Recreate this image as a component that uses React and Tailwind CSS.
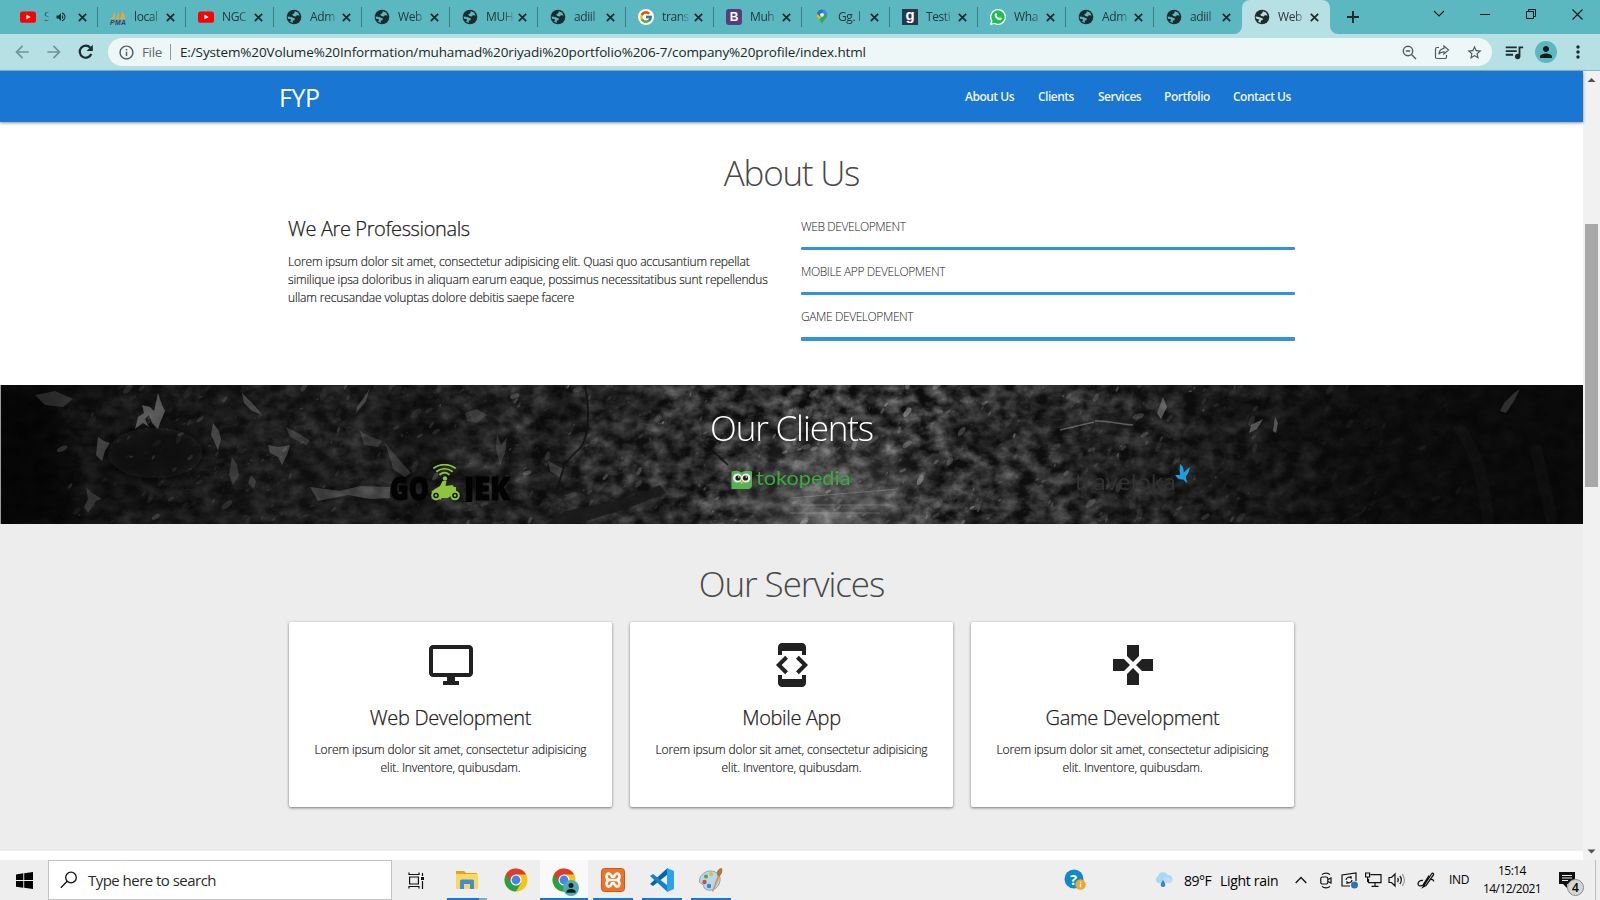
import React from "react";
import { MdDeveloperMode, MdGamepad, MdQueueMusic, MdPerson, MdArrowBack, MdArrowForward, MdStarBorder, MdInfoOutline, MdVolumeUp, MdMoreVert } from "react-icons/md";
import { FcGoogle } from "react-icons/fc";

const SANS = "font-['Open_Sans','Noto_Sans',sans-serif]";

function Globe({ land = "#5cb8c0" }) {
  return (
    <svg width="16" height="16" viewBox="0 0 16 16">
      <circle cx="8" cy="8" r="7.3" fill="#1c2b2e" />
      <path d="M9 2.2 12 3.6 13.6 6.6 10.6 6.2 9.8 7.6 7.2 6.9 6.2 5.2 8 4.4ZM1.6 7.6 5 8 7.6 9 8.6 9.2 8.8 11 6.8 11.6 6.6 14 4 12.6 5.4 10.4 1.9 9.6Z" fill={land} />
    </svg>
  );
}
function GlobeActive() {
  return <Globe land="#b6e0e3" />;
}
function YouTube() {
  return (
    <svg width="16" height="16" viewBox="0 0 16 16">
      <rect x="0" y="2.4" width="16" height="11.4" rx="2.6" fill="#f00" />
      <path d="M6.4 5.6v5l4.2-2.5z" fill="#fff" />
    </svg>
  );
}
function Pma() {
  return (
    <svg width="16" height="16" viewBox="0 0 16 16">
      <path d="M4.8 1 5 10H.5C3 8 4.300 4.500 4.800 1ZM8.600 0 9 10H5.500C7.600 7.500 8.300 4 8.600 0ZM11.500 2c2.300 2 3.300 4.500 3.800 8H9.600C11.300 8 12 5.500 11.500 2Z" fill="#f2a336" />
      <text x="0" y="15.800" fontSize="6.800" fontWeight="800" fontStyle="italic" textLength="16" fontFamily="Liberation Sans, sans-serif" fill="#2f3f6a">PMA</text>
    </svg>
  );
}
function Google() {
  return (
    <span className="flex size-4 items-center justify-center rounded-full bg-white">
      <FcGoogle size={14} />
    </span>
  );
}
function Bootstrap() {
  return <span className="flex size-4 items-center justify-center rounded-[3px] bg-[#563d7c] font-['Liberation_Sans',sans-serif] text-[12px] font-bold text-white">B</span>;
}
function Maps() {
  return (
    <svg width="16" height="16" viewBox="0 0 16 16">
      <defs>
        <clipPath id="pin"><path d="M8 .5a5.300 5.300 0 0 1 5.300 5.300C13.300 9.600 8.900 11 8 15.500 7.100 11 2.700 9.600 2.700 5.800A5.300 5.300 0 0 1 8 .5Z" /></clipPath>
      </defs>
      <g clipPath="url(#pin)">
        <rect width="16" height="16" fill="#34a853" />
        <path d="M0 0h16L9 6 3 13H0Z" fill="#fbbc04" />
        <path d="M0 0h7l-4 6-3 1Z" fill="#ea4335" />
        <path d="M6 0h7L6 8 3 4Z" fill="#1a73e8" />
        <path d="M10 0h6v5L11 6 8 4Z" fill="#4285f4" />
      </g>
      <circle cx="8" cy="5.800" r="1.900" fill="#e9f4f5" />
    </svg>
  );
}
function NineIcon() {
  return <span className="flex size-4 items-center justify-center bg-[#26384a] pb-[3px] font-['Liberation_Sans',sans-serif] text-[15px] font-bold text-white">g</span>;
}
function WhatsApp() {
  return (
    <svg width="16" height="16" viewBox="0 0 16 16">
      <path d="M8 0a8 8 0 0 1 0 16 8 8 0 0 1-3.600-.9L0 16l1-4.300A8 8 0 0 1 8 0Z" fill="#fff" />
      <path d="M8 1.300a6.700 6.700 0 1 1-3.400 12.500l-2.900.7.8-2.800A6.700 6.700 0 0 1 8 1.300Z" fill="#1fbf4f" />
      <path d="M5.600 4.200c.5-.4.9-.2 1.100.3l.5 1.200-.6.900c.5 1.200 1.400 2 2.600 2.500l.8-.8 1.700.8c.2 1-.6 2-1.700 2.100C7.400 11.200 4.700 8.400 4.600 6c0-.8.4-1.400 1-1.800Z" fill="#fff" />
    </svg>
  );
}

const tabs = [
  { icon: YouTube, label: "S", sound: true },
  { icon: Pma, label: "local" },
  { icon: YouTube, label: "NGC" },
  { icon: Globe, label: "Adm" },
  { icon: Globe, label: "Web" },
  { icon: Globe, label: "MUH" },
  { icon: Globe, label: "adiil" },
  { icon: Google, label: "trans" },
  { icon: Bootstrap, label: "Muh" },
  { icon: Maps, label: "Gg. l" },
  { icon: NineIcon, label: "Testi" },
  { icon: WhatsApp, label: "Wha" },
  { icon: Globe, label: "Adm" },
  { icon: Globe, label: "adiil" },
  { icon: GlobeActive, label: "Web", active: true },
];

function Tab({ icon: Icon, label, sound, active, last }) {
  return (
    <div className={`relative flex h-[34px] w-[88px] shrink-0 items-center ${sound ? "pl-[10px]" : "pl-[12px]"} ${active ? "z-10 rounded-t-[8px] bg-[#b6e0e3]" : ""}`}>
      <span className="flex size-4 shrink-0 items-center justify-center"><Icon /></span>
      <span className={`ml-[8px] shrink-0 whitespace-nowrap text-[12px] leading-[18px] tracking-[-0.4px] text-[#24373a] ${sound ? "w-[5px] [mask-image:linear-gradient(to_right,#000,rgba(0,0,0,0.15))]" : "w-[28px] [mask-image:linear-gradient(to_right,#000_60%,rgba(0,0,0,0.12))]"}`}>{label}</span>
      {sound && <MdVolumeUp size={12} className="ml-[6px] shrink-0 text-[#1c2b2e]" />}
      <svg className={`shrink-0 ${sound ? "ml-[11px]" : "ml-[4px]"}`} width="9" height="9" viewBox="0 0 9 9"><path d="M.8.8l7.400 7.400M8.200.8.8 8.200" stroke="#1c2b2e" strokeWidth="1.700" /></svg>
      {!active && !last && <span className="ml-auto h-[20px] w-px bg-[#3d7c83]" />}
      {active && (
        <>
          <svg className="absolute -left-[8px] bottom-0" width="8" height="8"><path d="M8 0v8H0a8 8 0 0 0 8-8Z" fill="#b6e0e3" /></svg>
          <svg className="absolute -right-[8px] bottom-0" width="8" height="8"><path d="M0 0v8h8a8 8 0 0 1-8-8Z" fill="#b6e0e3" /></svg>
        </>
      )}
    </div>
  );
}

function TabStrip() {
  return (
    <div className="flex h-[34px] bg-[#5cb8c0] pl-[10px]">
      {tabs.map((t, i) => <Tab key={i} {...t} last={i === 13} />)}
      <div className="ml-[16px] flex items-center text-[#1c2b2e]">
        <svg width="14" height="14" viewBox="0 0 14 14"><path d="M7 1v12M1 7h12" stroke="currentColor" strokeWidth="2" /></svg>
      </div>
      <div className="ml-auto flex h-[28px] items-center pr-[17px] text-[#0c1416]">
        <svg width="12" height="10" viewBox="0 0 12 10" className="mr-[35px]"><path d="M1 2l5 5 5-5" fill="none" stroke="currentColor" strokeWidth="1.100" /></svg>
        <svg width="10" height="10" viewBox="0 0 10 10" className="mr-[36px]"><path d="M0 5.500h10" stroke="currentColor" /></svg>
        <svg width="10" height="10" viewBox="0 0 10 10" className="mr-[36px]"><path d="M.5 2.500h7v7h-7zM2.500 2.500v-2h7v7h-2" fill="none" stroke="currentColor" /></svg>
        <svg width="11" height="11" viewBox="0 0 11 11"><path d="M.5.5l10 10M10.500.5l-10 10" stroke="currentColor" strokeWidth="1.100" /></svg>
      </div>
    </div>
  );
}

function Toolbar() {
  return (
    <div className="flex h-[37px] items-center border-b border-[#86b9c9] bg-[#b6e0e3] pl-[12px]">
      <MdArrowBack size={20} className="text-[#729498]" />
      <MdArrowForward size={20} className="ml-[12px] text-[#729498]" />
      <svg className="ml-[14px] mr-[14px]" width="16" height="16" viewBox="0 0 16 16"><path d="M13.300 10A6 6 0 1 1 12.300 3.800" fill="none" stroke="#1c2b2e" strokeWidth="2.200" /><path d="M14.800.8v6.200H8.600Z" fill="#1c2b2e" /></svg>
      <div className="flex h-[28px] w-[1384px] items-center rounded-full bg-[#edf7f8] pl-[10px] pr-[10px]">
        <MdInfoOutline size={17} className="text-[#4c5b5e]" />
        <span className="ml-[7px] w-[22px] whitespace-nowrap text-[13.500px] tracking-[-0.35px] text-[#5c6b6e]">File</span>
        <span className="ml-[6px] h-[16px] w-px bg-[#8c9a9c]" />
        <span className="ml-[9px] whitespace-nowrap text-[13.500px] tracking-[-0.13px] text-[#20282a]">E:/System%20Volume%20Information/muhamad%20riyadi%20portfolio%206-7/company%20profile/index.html</span>
        <span className="ml-auto flex items-center gap-[17px] text-[#4c5b5e]">
          <svg width="15" height="15" viewBox="0 0 15 15" fill="none" stroke="currentColor" strokeWidth="1.400"><circle cx="6" cy="6" r="4.700" /><path d="M9.500 9.500l4.500 4.500M3.800 6h4.400" /></svg>
          <svg width="16" height="15" viewBox="0 0 16 15" fill="none" stroke="currentColor" strokeWidth="1.200"><path d="M5 2.500H3a1.500 1.500 0 0 0-1.500 1.500v8A1.500 1.500 0 0 0 3 13.500h8a1.500 1.500 0 0 0 1.500-1.500v-2M10 1l4.500 4L10 9V6.800c-2.500 0-4 .7-5.200 2.400C5.200 5.800 7 3.700 10 3.300Z" /></svg>
          <MdStarBorder size={17} className="-mx-px" />
        </span>
      </div>
      <MdQueueMusic size={22} className="ml-[11px] text-[#1c2b2e]" />
      <span className="ml-[10px] flex size-[22px] items-center justify-center rounded-full bg-[#5cb8c0]"><MdPerson size={18} className="text-[#101c1e]" /></span>
      <MdMoreVert size={20} className="ml-[11px] text-[#1c2b2e]" />
    </div>
  );
}

function PageNav() {
  return (
    <nav className="relative z-10 flex h-[51px] items-center bg-[#1976d2] pl-[279px] pr-[291px] text-white shadow-[0_1px_3px_rgba(0,0,0,0.45)]">
      <span className="pt-px text-[25px] leading-[34px] tracking-[-0.4px]">FYP</span>
      <div className="ml-auto flex whitespace-nowrap text-[12px] font-semibold leading-[18px] tracking-[-0.5px] text-white/95">
        <span className="w-[73px]">About Us</span>
        <span className="w-[60px]">Clients</span>
        <span className="w-[66px]">Services</span>
        <span className="w-[69px]">Portfolio</span>
        <span className="w-[59px]">Contact Us</span>
      </div>
    </nav>
  );
}

const skills = [
  { name: "WEB DEVELOPMENT", bar: "h-[3px]" },
  { name: "MOBILE APP DEVELOPMENT", bar: "h-[3px]" },
  { name: "GAME DEVELOPMENT", bar: "h-[4px]" },
];

function About() {
  return (
    <section className="h-[263px] bg-white pt-[29px]">
      <h2 className="text-center text-[35px] font-light leading-[44px] tracking-[-1.25px] text-[#484848]">About Us</h2>
      <div className="flex pl-[288px] pr-[288px] pt-[20px]">
        <div className="w-[513px]">
          <h3 className="text-[20px] font-light leading-[28px] tracking-[-0.38px] text-[#222] [-webkit-text-stroke:0.25px_#222]">We Are Professionals</h3>
          <p className="mt-[10px] whitespace-nowrap text-[12px] font-light leading-[18px] tracking-[-0.14px] text-[#222] [-webkit-text-stroke:0.2px_#222]">
            Lorem ipsum dolor sit amet, consectetur adipisicing elit. Quasi quo accusantium repellat<br />
            similique ipsa doloribus in aliquam earum eaque, possimus necessitatibus sunt repellendus<br />
            ullam recusandae voluptas dolore debitis saepe facere
          </p>
        </div>
        <div className="flex flex-1 flex-col gap-[12px] pt-[3px]">
          {skills.map((s) => (
            <div key={s.name}>
              <p className="text-[12px] font-light leading-[18px] tracking-[-0.42px] text-[#222]">{s.name}</p>
              <div className={`mb-px mt-[11px] w-[494px] rounded-[1px] bg-[#2e93e2] ${s.bar}`} />
            </div>
          ))}
        </div>
      </div>
    </section>
  );
}

function seeded(seed) {
  let s = seed;
  return () => {
    s = (s * 1664525 + 1013904223) % 4294967296;
    return s / 4294967296;
  };
}
const rnd = seeded(41);
const leaves = Array.from({ length: 950 }, () => {
  const x = 60 + Math.pow(rnd(), 0.85) * 1400;
  const mid = Math.max(0, 1 - Math.abs(x - 880) / 420);
  const edge = x > 1260 ? 0.35 : 1;
  return { x, y: rnd() * 139, r: 1 + rnd() * rnd() * 6, a: -75 + rnd() * 60, o: (0.05 + rnd() * rnd() * (0.22 + mid * 0.3)) * edge };
});

function Forest() {
  return (
    <svg className="absolute inset-0" width="1583" height="139" viewBox="0 0 1583 139">
      <defs>
        <filter id="grain" x="0" y="0" width="100%" height="100%" colorInterpolationFilters="sRGB">
          <feTurbulence type="fractalNoise" baseFrequency="0.06 0.08" numOctaves="4" seed="8" />
          <feColorMatrix values="1.200 0 0 0 -0.34  1.200 0 0 0 -0.34  1.200 0 0 0 -0.34  0 0 0 0 1" />
        </filter>
        <filter id="patches" x="0" y="0" width="100%" height="100%" colorInterpolationFilters="sRGB">
          <feTurbulence type="fractalNoise" baseFrequency="0.02 0.03" numOctaves="4" seed="21" />
          <feColorMatrix values="0 0 0 0 0.04  0 0 0 0 0.04  0 0 0 0 0.04  3 0 0 0 -1.200" />
        </filter>
        <filter id="soft"><feGaussianBlur stdDeviation="0.6" /></filter>
        <filter id="blur"><feGaussianBlur stdDeviation="6" /></filter>
        <linearGradient id="light">
          <stop offset="0" stopColor="#080808" stopOpacity=".96" />
          <stop offset=".08" stopColor="#101010" stopOpacity=".84" />
          <stop offset=".28" stopColor="#191919" stopOpacity=".72" />
          <stop offset=".4" stopColor="#1c1c1c" stopOpacity=".58" />
          <stop offset=".5" stopColor="#222" stopOpacity=".35" />
          <stop offset=".57" stopColor="#222" stopOpacity=".4" />
          <stop offset=".66" stopColor="#1c1c1c" stopOpacity=".55" />
          <stop offset=".76" stopColor="#121212" stopOpacity=".75" />
          <stop offset=".86" stopColor="#0a0a0a" stopOpacity=".92" />
          <stop offset="1" stopColor="#080808" stopOpacity=".97" />
        </linearGradient>
        <radialGradient id="glow" cx="830" cy="139" r="120" gradientUnits="userSpaceOnUse">
          <stop offset="0" stopColor="#bbb" stopOpacity=".36" />
          <stop offset="1" stopColor="#999" stopOpacity="0" />
        </radialGradient>
      </defs>
      <rect width="1583" height="139" filter="url(#grain)" />
      <rect width="1583" height="139" fill="url(#light)" />
      <rect width="1583" height="139" filter="url(#patches)" opacity=".4" />
      <g filter="url(#blur)" fill="#080808" fillOpacity=".85">
        <ellipse cx="155" cy="68" rx="48" ry="26" />
        <path d="M395 0h50l-6 139h-44Z" fillOpacity=".3" />
        <path d="M540 0h34l-18 100-6 39h-34Z" fillOpacity=".3" />
        <path d="M0 0h60l15 139H0Z" fillOpacity=".5" />
      </g>
      <rect width="1583" height="139" fill="url(#glow)" />
      <g filter="url(#soft)" fill="#b0b0b0">
        {leaves.map((l, i) => (
          <ellipse key={i} cx={l.x} cy={l.y} rx={l.r} ry={l.r * 0.45} fillOpacity={l.o} transform={`rotate(${l.a} ${l.x} ${l.y})`} />
        ))}
        <g fillOpacity=".42">
          <path d="M158 8l4 12 3 6-5 12-2 6-6-6-3-8-4 4 4 8-6-4-8 6 3-12 6-4-2-8 8 2 4 4Z" />
          <path d="M98 52l6 4 6 2-5 8-3 10-6-6ZM242 8l6 6 8 8 6 8-10-4-8-8ZM213 38l6 8 2 8-3 12-4-10-3-6ZM268 60l10 2 12-2-3 10-5 10-4-8-8-4ZM357 22l10-14 3-6-4 14-10 12Z" fillOpacity=".3" />
          <path d="M232 72l5 8 2 10-6 10-4-10ZM251 90l5 6-2 8-6-6ZM86 102l6 6 10 6-6 2-8 12-4-6 4-8ZM360 46l12 6 10 4-4 6-14-2ZM385 58l10 12 16 18-6 4-12-8-2-8ZM286 42l12 6 12 8-4 4-16-8ZM35 10l20-4 18 8-10 8-18-2ZM465 28l12-4 10 6-10 8-10-2ZM497 48l4 12 6-8-2 16-5 12-4-16ZM548 76l16 8-4 8-10-6Z" fillOpacity=".2" />
          <path d="M310 102l30 4 20-5 30 1v11l-20 1-22-4-30 6Z" fillOpacity=".26" />
          <path d="M1163 12l4 10-6 12-4-6ZM1251 40l8-4 4-2-6 10-8 4ZM1275 32l3 6-2 10-3-2Z" />
          <path d="M1504 18l10-10 6-4-6 12-8 12-6-2Z" fillOpacity=".22" />
        </g>
      </g>
      <path d="M565 126l65-14 30-12 6 8-40 16-50 15h-30Z" fill="#1a1a1a" fillOpacity=".85" filter="url(#soft)" />
      <path d="M585 2c5 20 4 50-4 60l-16 16-8 26M704 58l24 22" fill="none" stroke="#111" strokeWidth="2" strokeOpacity=".8" filter="url(#soft)" />
      <path d="M790 113l108-9M800 120h90M790 128h90" stroke="#bbb" strokeOpacity=".3" fill="none" filter="url(#soft)" />
      <path d="M1095 36c12-1 22 3 38 4M1060 45l34-8" stroke="#bbb" strokeOpacity=".4" strokeWidth="1.500" fill="none" filter="url(#soft)" />
      <path d="M1455 40c25 25 28 60 34 99M1535 60l18 79" stroke="#333" strokeOpacity=".3" strokeWidth="6" fill="none" filter="url(#blur)" />
      <rect width="1" height="139" fill="#9a9a9a" />
    </svg>
  );
}

function Gojek() {
  return (
    <svg width="122" height="38" viewBox="0 0 122 38">
      <g fontFamily="Open Sans, sans-serif" fontWeight="800" fontSize="31" fill="#030303" stroke="#030303" strokeWidth="1">
        <text x="1" y="35.500" textLength="39" lengthAdjust="spacingAndGlyphs">GO</text>
        <text x="75" y="35.500" textLength="46" lengthAdjust="spacingAndGlyphs">JEK</text>
      </g>
      <g fill="none" stroke="#8cc63f" strokeWidth="1.700" strokeLinecap="round">
        <path d="M45 4c6-4.500 15-4.500 21 0M48 7.300c4.500-3.400 10.500-3.400 15 0M51 10.500c2.700-2.200 6.300-2.200 9 0" />
      </g>
      <circle cx="56" cy="14.500" r="2.200" fill="#8cc63f" />
      <path d="M53.500 17h4l-1 5 7-1 1.500 2 2 0 0 4 2 3-6 1-4 3h-6l-2 2-4-6-5-2 4-3 5-3Z" fill="#8cc63f" />
      <circle cx="47" cy="31.500" r="3.800" fill="#151515" stroke="#8cc63f" strokeWidth="2" />
      <circle cx="66" cy="31.500" r="3.800" fill="#151515" stroke="#8cc63f" strokeWidth="2" />
      <circle cx="47" cy="31.500" r="1.200" fill="#8cc63f" />
      <circle cx="66" cy="31.500" r="1.200" fill="#8cc63f" />
    </svg>
  );
}
function Tokopedia() {
  return (
    <svg width="122" height="38" viewBox="0 0 122 38">
      <path d="M1.500 7.500c5-1.500 7-1 10 1 3-2 6-2.500 10.500-1v14a4 4 0 0 1-4 3.500H1.500Z" fill="#55b352" />
      <circle cx="7.500" cy="14" r="4.500" fill="#eee" /><circle cx="16" cy="14" r="4.500" fill="#eee" />
      <circle cx="8" cy="14" r="2.600" fill="#222" /><circle cx="15.500" cy="14" r="2.600" fill="#222" />
      <circle cx="8.800" cy="13" r=".8" fill="#fff" /><circle cx="16.300" cy="13" r=".8" fill="#fff" />
      <path d="M10 17.500h3.600l-1.800 3Z" fill="#f4c542" />
      <text x="26" y="21" fontFamily="Lato, sans-serif" fontSize="20" fontWeight="400" textLength="94.500" lengthAdjust="spacingAndGlyphs" fill="#3aab3c">tokopedia</text>
    </svg>
  );
}
function Traveloka() {
  return (
    <svg width="122" height="38" viewBox="0 0 122 38">
      <text x="3" y="25.500" fontFamily="Open Sans, sans-serif" fontSize="21" textLength="101" lengthAdjust="spacingAndGlyphs" fill="#323232">traveloka</text>
      <path d="M108.500 0c3 3 3.300 5.500 3.200 8.500l6-5.500c-.6 6-2.500 8-4 9.500l1.500 6.500-4-3.500c-4 .5-6-1-8-4.500l5 0c-.8-3-.8-7 .3-11Z" fill="#1b9fe0" />
    </svg>
  );
}

function Clients() {
  return (
    <section className="relative h-[139px] overflow-hidden">
      <Forest />
      <div className="relative pt-[21px]">
        <h2 className="text-center text-[35px] font-light leading-[44px] tracking-[-1.15px] text-white">Our Clients</h2>
        <div className="mx-auto grid w-[1024px] grid-cols-3 justify-items-center pt-[14px]">
          <Gojek /><Tokopedia /><Traveloka />
        </div>
      </div>
    </section>
  );
}

function Monitor({ size, className }) {
  return (
    <svg width={size} height={size} viewBox="0 0 24 24" fill="currentColor" className={className}>
      <path d="M21 2H3c-1.100 0-2 .9-2 2v12c0 1.100.9 2 2 2h7v2H8v2h8v-2h-2v-2h7c1.100 0 2-.9 2-2V4c0-1.100-.9-2-2-2zm0 14H3V4h18v12z" />
    </svg>
  );
}

const services = [
  { icon: Monitor, title: "Web Development" },
  { icon: MdDeveloperMode, title: "Mobile App" },
  { icon: MdGamepad, title: "Game Development" },
];

function Services() {
  return (
    <section className="h-[327px] bg-[#ededed] pt-[38px]">
      <h2 className="text-center text-[35px] font-light leading-[44px] tracking-[-1.05px] text-[#484848]">Our Services</h2>
      <div className="mx-auto mt-[16px] grid w-[1005px] grid-cols-3 gap-[18px]">
        {services.map(({ icon: Icon, title }) => (
          <div key={title} className="flex h-[185px] flex-col items-center rounded-[2px] bg-white pt-[19px] text-center shadow-[0_1px_3px_rgba(0,0,0,0.5)]">
            <Icon size={48} className="text-[#212121]" />
            <h3 className="mt-[15px] text-[20px] font-light leading-[28px] tracking-[-0.35px] text-[#222] [-webkit-text-stroke:0.25px_#222]">{title}</h3>
            <p className="mt-[9px] whitespace-nowrap text-[12px] font-light leading-[18px] tracking-[-0.12px] text-[#222] [-webkit-text-stroke:0.2px_#222]">Lorem ipsum dolor sit amet, consectetur adipisicing<br />elit. Inventore, quibusdam.</p>
          </div>
        ))}
      </div>
    </section>
  );
}

function Scrollbar() {
  return (
    <div className="flex w-[17px] flex-col items-center bg-[#f1f1f1]">
      <svg width="17" height="17" viewBox="0 0 17 17"><path d="M4.500 11 8.500 7l4 4Z" fill="#505050" /></svg>
      <div className="mt-[136px] h-[263px] w-[13px] bg-[#a8a8a8]" />
      <svg className="mt-auto" width="17" height="17" viewBox="0 0 17 17"><path d="M4.500 6.500l4 4 4-4Z" fill="#505050" /></svg>
    </div>
  );
}

function Chrome() {
  return (
    <svg width="24" height="24" viewBox="0 0 24 24">
      <circle cx="12" cy="12" r="11.500" fill="#fbc116" />
      <path d="M12 12 2 6.300A11.500 11.500 0 0 0 12 23.500l5-8.600Z" fill="#26a148" />
      <path d="M2 6.300A11.500 11.500 0 0 1 22 6.500H12L7 15Z" fill="#de3b30" />
      <circle cx="12" cy="12" r="5.500" fill="#fff" /><circle cx="12" cy="12" r="4.400" fill="#4285e8" />
    </svg>
  );
}
function Explorer() {
  return (
    <svg width="24" height="24" viewBox="0 0 24 24">
      <path d="M1 3h8l2 2h11v16H1Z" fill="#e0a31f" /><path d="M1 6h22v15H1Z" fill="#ffd65f" />
      <path d="M5 21v-8a1.500 1.500 0 0 1 1.500-1.500h11A1.500 1.500 0 0 1 19 13v8h-4v-5H9v5Z" fill="#3c8fd4" />
    </svg>
  );
}
function ChromeUser() {
  return (
    <span className="relative flex">
      <Chrome />
      <svg className="absolute -bottom-[4px] -right-[3px]" width="16" height="16" viewBox="0 0 16 16"><circle cx="8" cy="8" r="8" fill="#52a9b1" /><circle cx="8" cy="5.500" r="2.500" fill="#101c1e" /><path d="M3.300 12c0-4 9.400-4 9.400 0v.8H3.300Z" fill="#101c1e" /></svg>
    </span>
  );
}
function Xampp() {
  return (
    <svg width="24" height="24" viewBox="0 0 24 24">
      <rect x=".5" y=".5" width="23" height="23" rx="3" fill="#ef7226" stroke="#c65c1c" />
      <path d="M8 12c-3-1-3.500-6.500 0-6.500 2.500 0 2 3.500 4 3.500s1.500-3.500 4-3.500c3.500 0 3 5.500 0 6.500 3 1 3.500 6.500 0 6.500-2.500 0-2-3.500-4-3.500s-1.500 3.500-4 3.500c-3.500 0-3-5.500 0-6.500Zm0 0h8" fill="none" stroke="#fff" strokeWidth="2.700" />
    </svg>
  );
}
function VsCode() {
  return (
    <svg width="24" height="24" viewBox="0 0 24 24">
      <path d="M17.500 0v6.500L3 18 0 16Z" fill="#0065a9" />
      <path d="M17.500 24v-6.500L3 6 0 8Z" fill="#1481c7" />
      <path d="M17 0l7 3v18l-7 3Z" fill="#2ba3ec" />
    </svg>
  );
}
function Paint() {
  return (
    <svg width="26" height="26" viewBox="0 0 26 26">
      <path d="M12 4c7 0 11 4 10 10s-6 10-12 9-3-5-6-6-3-3-2-6 5-7 10-7Z" fill="#b9d7ea" stroke="#7796aa" strokeWidth=".8" />
      <circle cx="6.500" cy="15" r="2.200" fill="#d94a36" /><circle cx="8" cy="9.500" r="2" fill="#4aa84a" /><circle cx="13" cy="7" r="2" fill="#e6b93c" /><circle cx="11" cy="19" r="2.200" fill="#3f7fd0" />
      <path d="M20 8l2 1-7 16-1-1Z" fill="#d99246" /><path d="M19 8c-1-4 2-7 5-7 1 3 0 6-2.500 8.500Z" fill="#b0763c" />
    </svg>
  );
}

const apps = [
  { icon: Explorer, line: "w-[32px] bg-[#1477d1]", extra: true, box: "w-[49px]" },
  { icon: Chrome, box: "w-[49px]" },
  { icon: ChromeUser, line: "w-[48px] bg-[#1477d1]", box: "w-[48px] bg-[#f9f9f9]" },
  { icon: Xampp, line: "w-[40px] bg-[#1477d1]", box: "w-[49px]" },
  { icon: VsCode, line: "w-[40px] bg-[#1477d1]", box: "w-[49px]" },
  { icon: Paint, line: "w-[40px] bg-[#1477d1]", box: "w-[49px]" },
];

function Taskbar() {
  return (
    <footer className="flex h-[40px] items-center bg-[#eee] text-black">
      <div className="flex w-[48px] justify-center">
        <svg width="17" height="17" viewBox="0 0 17 17"><path d="M0 2.400 7.300 1.300v6.800H0ZM8.200 1.200 17 0v8.100H8.200ZM0 9h7.300v6.800L0 14.700ZM8.200 9H17v8l-8.800-1.200Z" /></svg>
      </div>
      <div className="flex h-[40px] w-[344px] items-center border border-[#c4c4c4] bg-white pl-[11px]">
        <svg width="18" height="18" viewBox="0 0 18 18" fill="none" stroke="#111" strokeWidth="1.300"><circle cx="11" cy="6.500" r="5.300" /><path d="M7.200 10.300.8 16.700" /></svg>
        <span className="ml-[10px] text-[15px] tracking-[-0.53px] text-[#2b2b2b]">Type here to search</span>
      </div>
      <svg className="ml-[16px] mr-[17px]" width="17" height="17" viewBox="0 0 17 17" fill="none" stroke="#111" strokeWidth="1.200"><path d="M1.600 5h8.800v7H1.600ZM1 .5v2h10v-2M1 16.500v-2h10v2M14.500 1v3M14.500 9v8" /><path d="M13 5h3v3h-3z" fill="#111" stroke="none" /></svg>
      <div className="flex h-[40px]">
        {apps.map(({ icon: Icon, line, extra, box }, i) => (
          <div key={i} className={`flex flex-col items-center ${box}`}>
            <span className="flex h-[38px] items-center justify-center pt-[2px]"><Icon /></span>
            {line && <span className="flex h-[2px]"><span className={`h-[2px] ${line}`} />{extra && <span className="h-[2px] w-[8px] bg-[#72addf]" />}</span>}
          </div>
        ))}
      </div>
      <div className="ml-auto flex h-[40px] items-center">
        <svg width="22" height="22" viewBox="0 0 22 22"><circle cx="10" cy="10" r="9.500" fill="#1089c9" /><text x="6" y="15.500" fontSize="15" fontWeight="700" fontFamily="Open Sans, sans-serif" fill="#fff">?</text><circle cx="16.500" cy="15.500" r="5.200" fill="#f0a52d" /><path d="M16.500 12.500v1.200M16.500 14.800v3.500" stroke="#fff" strokeWidth="1.400" /></svg>
        <svg className="ml-[68px]" width="20" height="18" viewBox="0 0 20 18"><path d="M4 12a4 4 0 0 1 0-7 5.500 5.500 0 0 1 10-1 4.200 4.200 0 0 1 2 8Z" fill="#a9d8f7" /><path d="M10 7a5 5 0 0 1 8 3c0 2-2 2-4 2H7Z" fill="#c9d6f2" /><path d="M9 9c3 4 3 7 0 7s-3-3 0-7Z" fill="#2b88d8" /></svg>
        <span className="ml-[10px] w-[36px] whitespace-nowrap text-[14px] tracking-[-0.5px]">89°F</span>
        <span className="w-[75px] whitespace-nowrap text-[14px] tracking-[-0.3px]">Light rain</span>
        <svg width="12" height="8" viewBox="0 0 12 8" fill="none" stroke="#111" strokeWidth="1.300"><path d="M.7 7 6 1.500 11.300 7" /></svg>
        <svg className="ml-[13px]" width="12" height="17" viewBox="0 0 12 17" fill="none" stroke="#111" strokeWidth="1.200"><rect x=".8" y="5" width="7" height="7" rx="1.500" /><path d="M8 7.500l3-1.500v5L8 9.500M2 2.600C4 .6 8 .6 10 2.600M2 14.400c2 2 6 2 8 0" /></svg>
        <svg className="ml-[9px]" width="18" height="17" viewBox="0 0 18 17" fill="none" stroke="#111" strokeWidth="1.200"><path d="M9 14H1V3l14-2v8M5 8a3 3 0 0 1 5-2V4M11 8a3 3 0 0 1-5 2v2" /><circle cx="13.500" cy="13" r="3.500" fill="#2f70bd" stroke="none" /></svg>
        <svg className="ml-[6px]" width="17" height="16" viewBox="0 0 17 16" fill="none" stroke="#111" strokeWidth="1.200"><path d="M5.500 2.600H16v8H3.500V7M10 10.600v3.800M6.500 14.400h7M.6 1h4v4h-4ZM2.600 5v5" /></svg>
        <svg className="ml-[6px]" width="18" height="16" viewBox="0 0 18 16" fill="none" stroke="#111" strokeWidth="1.200"><path d="M1 5.500h2.500L7 2v12l-3.500-3.500H1ZM9.500 6c1 1.200 1 2.800 0 4M11.800 4c2 2.200 2 5.800 0 8" /><path d="M14.200 2c3 3.500 3 8.500 0 12" stroke="#999" /></svg>
        <svg className="ml-[11px]" width="18" height="17" viewBox="0 0 18 17" fill="none" stroke="#111" strokeWidth="1.300"><path d="M6 15 14.500 2c1-1.500 2.500-.5 2 1L9 13.500 6 15ZM6 8.500C3 8 1 10 1 12s3 2.500 5 1l6-9.500M12 8c3-1.500 5 0 4.500 1.500" /></svg>
        <span className="ml-[14px] w-[34px] whitespace-nowrap text-[12px] tracking-[-0.3px]">IND</span>
        <div className="flex w-[58px] flex-col items-center whitespace-nowrap text-[12px] leading-[18px] tracking-[-0.55px]"><span>15:14</span><span>14/12/2021</span></div>
        <span className="relative ml-[18px] mr-[19px] flex">
          <svg width="17" height="16" viewBox="0 0 17 16"><path d="M0 0h16v12H8v4l-4-4H0Z" fill="#111" /><path d="M3 3.500h10M3 6h10M3 8.500h6" stroke="#eee" /></svg>
          <span className="absolute -bottom-[8px] -right-[8px] flex size-[17px] items-center justify-center rounded-full border border-[#8a8a8a] bg-[#d5d5d5] text-[12px] font-semibold">4</span>
        </span>
        <span className="mr-[4px] h-[40px] w-px bg-[#bdbdbd]" />
      </div>
    </footer>
  );
}

export default function App() {
  return (
    <div className={`flex h-[900px] w-[1600px] flex-col overflow-hidden bg-white ${SANS}`}>
      <TabStrip />
      <Toolbar />
      <div className="flex h-[789px]">
        <main className="w-[1583px]">
          <PageNav />
          <About />
          <Clients />
          <Services />
          <div className="h-[9px] bg-white" />
        </main>
        <Scrollbar />
      </div>
      <Taskbar />
    </div>
  );
}
